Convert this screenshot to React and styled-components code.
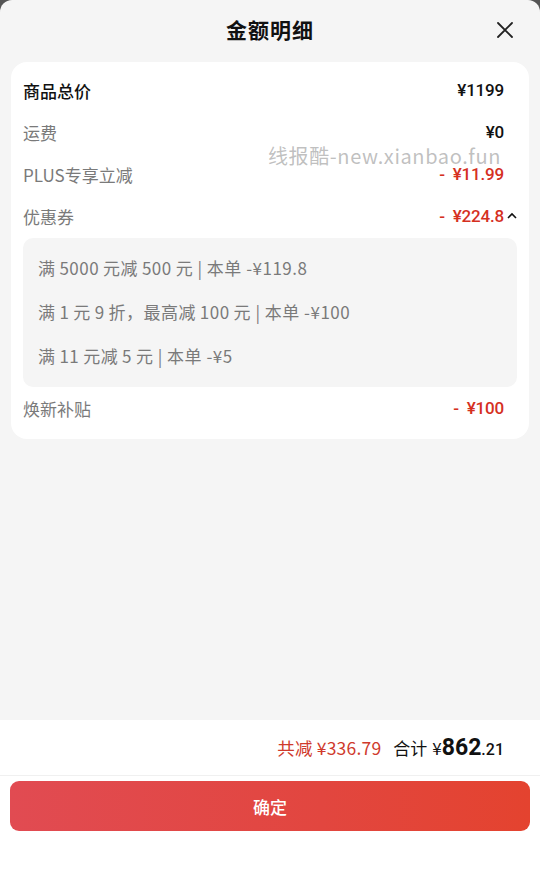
import React from "react";
import styled, { createGlobalStyle } from "styled-components";

const Global = createGlobalStyle`
  html, body { margin: 0; padding: 0; background: #555; }
  body { font-family: "Noto Sans CJK SC", "Noto Sans", sans-serif; -webkit-font-smoothing: antialiased; }
  * { box-sizing: border-box; }
`;

const Sheet = styled.div`
  position: relative;
  width: 540px;
  height: 874px;
  display: flex;
  flex-direction: column;
  background: #f5f5f5;
  border-radius: 12px 12px 0 0;
  overflow: hidden;
`;

const Header = styled.div`
  position: relative;
  height: 62px;
  padding-bottom: 5px;
  display: flex;
  align-items: center;
  justify-content: center;
`;

const Title = styled.div`
  font-size: 21px;
  font-weight: 700;
  color: #111;
  letter-spacing: 1px;
`;

const Close = styled.button`
  position: absolute;
  right: 26px;
  top: 21px;
  width: 18px;
  height: 18px;
  padding: 0;
  border: 0;
  background: none;
  display: flex;
`;

const Card = styled.div`
  margin: 0 11px;
  background: #fff;
  border-radius: 16px;
  padding: 7px 12px 10px 12px;
  display: flex;
  flex-direction: column;
`;

const Row = styled.div`
  height: 42px;
  display: flex;
  align-items: center;
  justify-content: space-between;
  padding-right: 13px;
  position: relative;
`;

const Label = styled.span`
  font-size: 17px;
  color: ${(p) => (p.$strong ? "#111" : "#7a7a7a")};
  font-weight: ${(p) => (p.$strong ? 500 : 400)};
`;

const Value = styled.span`
  font-family: "Roboto", "Liberation Sans", sans-serif;
  font-size: 17px;
  font-weight: 500;
  color: ${(p) => (p.$red ? "#d5301f" : "#111")};
  letter-spacing: -0.2px;
  white-space: pre;
`;

const Chevron = styled.svg`
  position: absolute;
  right: 0;
  top: 50%;
  margin-top: -4px;
`;

const CouponBox = styled.div`
  background: #f5f5f5;
  border-radius: 10px;
  padding: 9px 15px 8px;
  margin-top: 1px;
  display: flex;
  flex-direction: column;
`;

const Coupon = styled.div`
  height: 44px;
  padding-bottom: 3px;
  display: flex;
  align-items: center;
  font-size: 17px;
  letter-spacing: 0.5px;
  color: #7a7a7a;
  font-family: "Noto Sans CJK SC", "Noto Sans", sans-serif;
`;

const Spacer = styled.div`
  flex: 1;
`;

const Footer = styled.div`
  background: #fff;
  display: flex;
  flex-direction: column;
  height: 154px;
`;

const Summary = styled.div`
  height: 56px;
  display: flex;
  align-items: center;
  justify-content: flex-end;
  padding-right: 36px;
  gap: 12px;
  border-bottom: 1px solid #f0f0f0;
`;

const Saved = styled.span`
  font-size: 17.5px;
  color: #cf3a2c;
  letter-spacing: 0.2px;
`;

const Total = styled.span`
  display: flex;
  align-items: baseline;
  font-size: 17px;
  color: #111;
`;

const Yen = styled.span`
  margin-left: 5px;
  font-size: 17px;
`;

const Big = styled.span`
  font-family: "Roboto", "Liberation Sans", sans-serif;
  font-size: 23px;
  font-weight: 700;
`;

const Small = styled.span`
  font-family: "Roboto", "Liberation Sans", sans-serif;
  font-size: 16px;
  font-weight: 500;
`;

const Confirm = styled.button`
  margin: 5px 10px 0;
  height: 50px;
  border: 0;
  border-radius: 9px;
  background: linear-gradient(90deg, #e14b52 0%, #e2463f 60%, #e4432f 100%);
  color: #fff;
  font-size: 17px;
  font-weight: 500;
  font-family: "Noto Sans CJK SC", sans-serif;
`;

const Watermark = styled.div`
  position: absolute;
  left: 268px;
  top: 141px;
  font-size: 20px;
  color: rgba(150, 150, 150, 0.6);
  font-family: "Noto Sans CJK SC", "Noto Sans", sans-serif;
  pointer-events: none;
  letter-spacing: 0.6px;
`;

const rows = [
  { label: "商品总价", value: "¥1199", strong: true },
  { label: "运费", value: "¥0" },
  { label: "PLUS专享立减", value: "-  ¥11.99", red: true },
];

const coupons = [
  "满\u20095000\u2009元减\u2009500\u2009元 | 本单 -¥119.8",
  "满\u20091\u2009元\u20099\u2009折，最高减\u2009100\u2009元 | 本单 -¥100",
  "满\u200911\u2009元减\u20095\u2009元 | 本单 -¥5",
];

export default function App() {
  return (
    <>
      <Global />
      <Sheet>
        <Header>
          <Title>金额明细</Title>
          <Close aria-label="关闭">
            <svg width="18" height="18" viewBox="0 0 18 18">
              <path d="M2 2 L16 16 M16 2 L2 16" stroke="#222" strokeWidth="1.8" strokeLinecap="round" />
            </svg>
          </Close>
        </Header>
        <Card>
          {rows.map((r) => (
            <Row key={r.label}>
              <Label $strong={r.strong}>{r.label}</Label>
              <Value $red={r.red}>{r.value}</Value>
            </Row>
          ))}
          <Row>
            <Label>优惠券</Label>
            <Value $red>{"-  ¥224.8"}</Value>
            <Chevron width="10" height="7" viewBox="0 0 10 7">
              <path d="M1 6 L5 2 L9 6" fill="none" stroke="#111" strokeWidth="1.6" />
            </Chevron>
          </Row>
          <CouponBox>
            {coupons.map((c) => (
              <Coupon key={c}>{c}</Coupon>
            ))}
          </CouponBox>
          <Row>
            <Label>焕新补贴</Label>
            <Value $red>{"-  ¥100"}</Value>
          </Row>
        </Card>
        <Spacer />
        <Footer>
          <Summary>
            <Saved>共减 ¥336.79</Saved>
            <Total>
              合计<Yen>¥</Yen>
              <Big>862</Big>
              <Small>.21</Small>
            </Total>
          </Summary>
          <Confirm>确定</Confirm>
        </Footer>
        <Watermark>线报酷-new.xianbao.fun</Watermark>
      </Sheet>
    </>
  );
}
